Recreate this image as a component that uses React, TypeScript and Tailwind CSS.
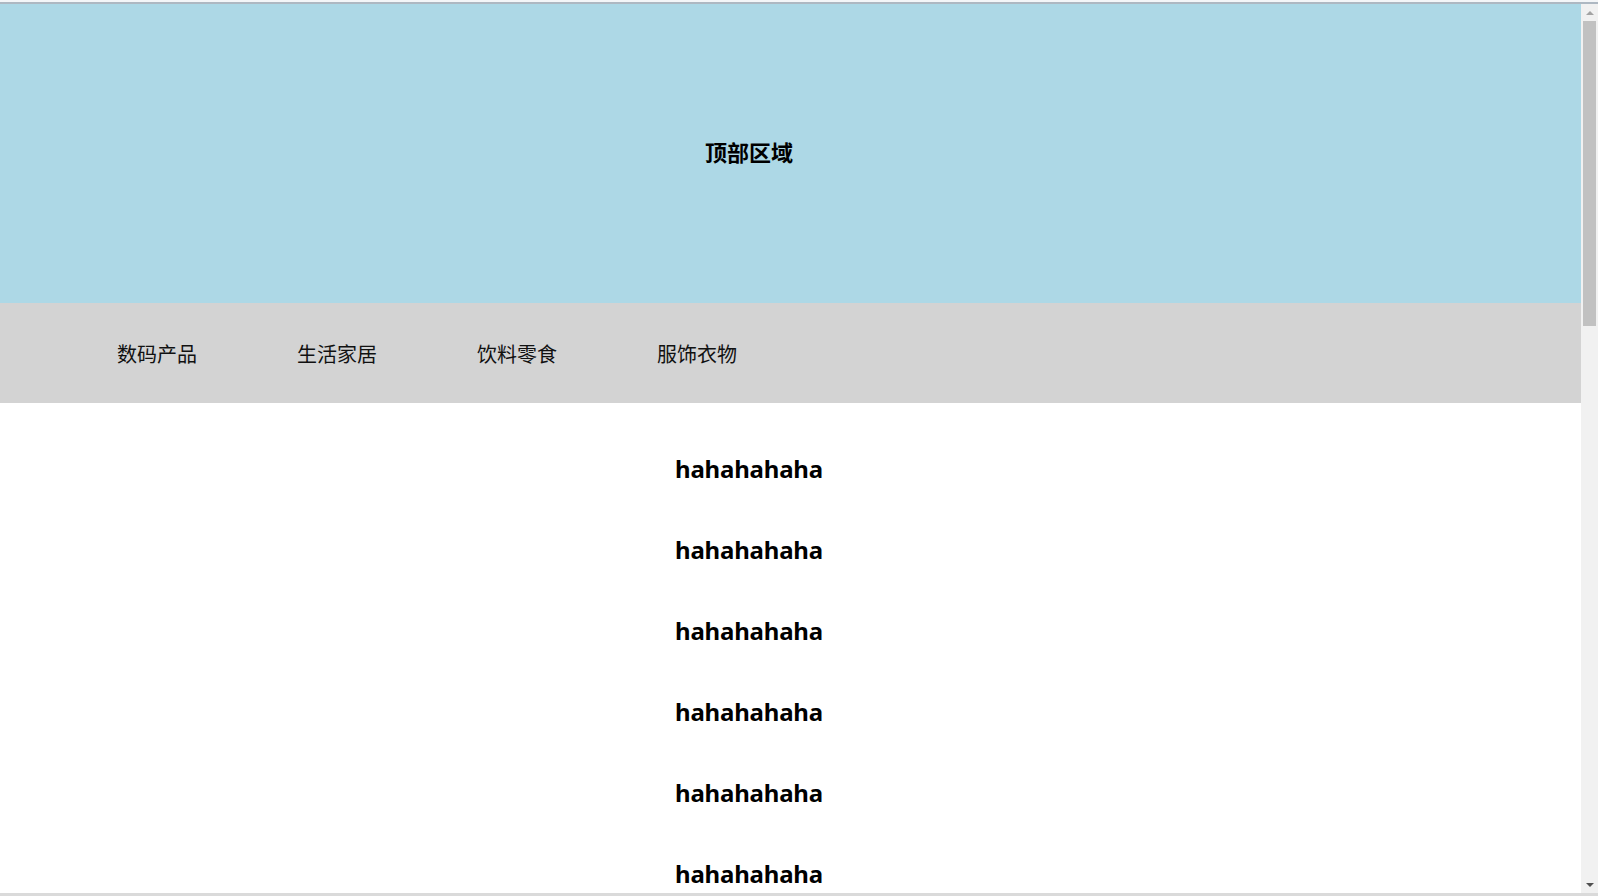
const navItems = ["数码产品", "生活家居", "饮料零食", "服饰衣物"];
const lines = Array.from({ length: 6 }, () => "hahahahaha");

const App = () => {
  return (
    <div
      className="h-[896px] w-[1598px] overflow-hidden flex flex-col bg-white text-black"
      style={{ fontFamily: '"Noto Sans", "Noto Sans CJK SC", sans-serif' }}
    >
      {/* window top edge */}
      <div className="h-[2px] bg-[#f4f6f8]" />
      <div className="h-[2px] bg-[#aeb8c2]" />

      <div className="flex-1 flex min-h-0">
        {/* page */}
        <div className="flex-1 flex flex-col overflow-hidden">
          <header className="h-[299px] shrink-0 bg-[#add8e6] flex items-center pb-[4px]">
            <h1 className="w-[1498px] text-center text-[22px] font-bold leading-none">
              顶部区域
            </h1>
          </header>

          <nav className="h-[100px] shrink-0 bg-[#d3d3d3] flex items-center pl-[117px] pt-[4px]">
            {navItems.map((item) => (
              <a key={item} className="w-[180px] shrink-0 text-[20px] leading-none text-[#111]">
                {item}
              </a>
            ))}
          </nav>

          <div className="pt-[25px] flex flex-col">
            {lines.map((text, i) => (
              <div
                key={i}
                className="h-[81px] shrink-0 flex items-center justify-center w-[1498px]"
              >
                <h2 className="text-[24px] font-bold leading-none tracking-[-0.2px]">
                  {text}
                </h2>
              </div>
            ))}
          </div>
        </div>

        {/* scrollbar */}
        <div className="w-[17px] shrink-0 bg-[#f1f1f1] flex flex-col items-center">
          <div className="h-[17px] w-full flex items-center justify-center">
            <div className="w-0 h-0 border-l-[4px] border-r-[4px] border-b-[4px] border-l-transparent border-r-transparent border-b-[#a3a3a3]" />
          </div>
          <div className="h-[305px] w-[13px] bg-[#c1c1c1]" />
          <div className="flex-1" />
          <div className="h-[17px] w-full flex items-center justify-center">
            <div className="w-0 h-0 border-l-[4px] border-r-[4px] border-t-[4px] border-l-transparent border-r-transparent border-t-[#505050]" />
          </div>
        </div>
      </div>

      {/* window bottom edge */}
      <div className="h-[3px] bg-[#dadada]" />
    </div>
  );
};

export default App;
